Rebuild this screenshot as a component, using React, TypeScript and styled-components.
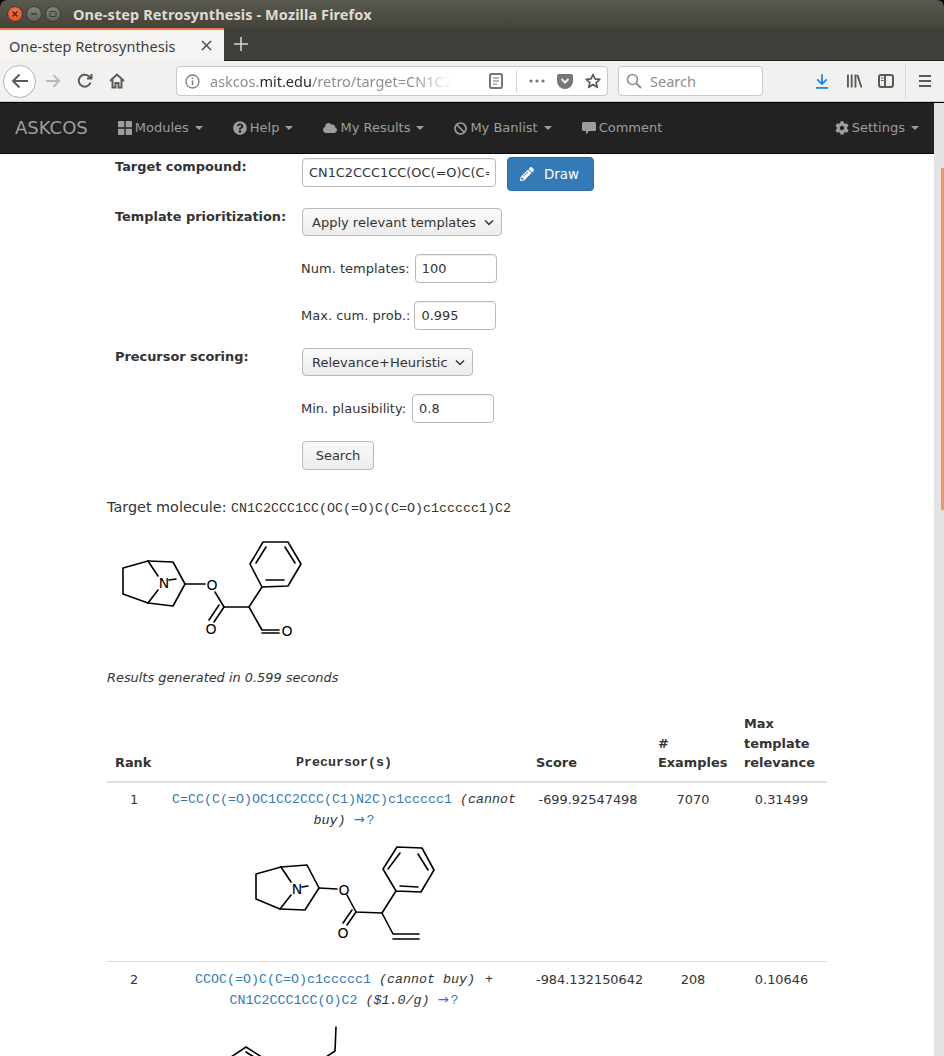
import React from "react";
import styled, { createGlobalStyle } from "styled-components";
import { FaCloud, FaBan, FaCog, FaQuestionCircle, FaPencilAlt } from "react-icons/fa";

const Global = createGlobalStyle`
  html, body { margin: 0; padding: 0; height: 1056px; overflow: hidden; background: #fff; }
  * { box-sizing: border-box; }
`;

const sans = `"DejaVu Sans", Verdana, sans-serif`;
const ui = `"Noto Sans", "Open Sans", sans-serif`;
const mono = `"Liberation Mono", "Courier New", monospace`;

const Win = styled.div`
  width: 944px; height: 1056px; display: flex; flex-direction: column; overflow: hidden;
  background: #000;
`;
const TitleBar = styled.div`
  height: 28px; flex: none; display: flex; align-items: center; padding-left: 7px;
  background: linear-gradient(#5a5950, #454439); border-radius: 7px 7px 0 0;
`;
const WinBtn = styled.span<{ $close?: boolean }>`
  width: 16px; height: 16px; border-radius: 50%; margin-right: 3px; display: flex;
  align-items: center; justify-content: center;
  background: ${p => (p.$close ? "radial-gradient(circle at 50% 35%, #f47a4a, #d9471c)" : "linear-gradient(#84837b, #63625a)")};
  border: 1px solid #3c3b34;
`;
const Title = styled.div`
  margin-left: 9px; font: 700 14.5px ${ui}; letter-spacing: 0.1px; color: #dfdbd2; white-space: nowrap;
`;
const TabStrip = styled.div`
  height: 33px; flex: none; display: flex; background: #3f3e38; border-bottom: 1px solid #1c1b18;
`;
const Tab = styled.div`
  width: 224px; height: 33px; flex: none; background: #f5f4f2; border-top: 2px solid #ee7c50;
  display: flex; align-items: center; padding-left: 9px; font: 400 14.5px ${ui}; color: #3e3d39;
`;
const TabLabel = styled.span` flex: 1; white-space: nowrap; `;
const TabClose = styled.svg` margin-right: 12px; flex: none; `;
const NewTab = styled.svg` margin: 9px 0 0 10px; flex: none; `;
const Toolbar = styled.div`
  height: 41px; flex: none; display: flex; align-items: center; background: #f2f1ef;
  border-bottom: 1px solid #cfcdc9; padding-left: 3px;
`;
const BackBtn = styled.span`
  width: 33px; height: 33px; border-radius: 50%; background: #fff; border: 1px solid #b3b1ad;
  display: flex; align-items: center; justify-content: center; flex: none;
`;
const ToolIcon = styled.svg<{ $ml: number }>`
  margin-left: ${p => p.$ml}px; flex: none; display: block;
`;
const UrlBar = styled.div`
  width: 432px; height: 30px; margin-left: 51px; flex: none; background: #fff;
  border: 1px solid #cbc9c5; border-radius: 4px; display: flex; align-items: center; padding-left: 8px;
`;
const UrlText = styled.div`
  width: 242px; margin-left: 10px; white-space: nowrap; flex: none;
  font: 400 14.5px ${ui}; color: #8f8e8b;
  mask-image: linear-gradient(to right, #000 84%, transparent 100%);
`;
const UrlHost = styled.span` color: #2b2a28; `;
const UrlSep = styled.span` width: 1px; height: 22px; background: #d5d3cf; margin-left: 13px; flex: none; `;
const SearchBox = styled.div`
  width: 145px; height: 30px; margin-left: 10px; flex: none; background: #fff;
  border: 1px solid #cbc9c5; border-radius: 4px; display: flex; align-items: center; padding-left: 7px;
  font: 400 14.5px ${ui}; color: #8f8e8b;
`;
const SearchLabel = styled.span` margin-left: 8px; `;
const ToolSep = styled.span` width: 1px; height: 34px; background: #dcdad6; margin-left: 11px; flex: none; `;
const Body = styled.div` flex: 1; min-height: 0; display: flex; background: #fff; margin-top: 1px; `;
const Main = styled.div` flex: 1; min-width: 0; overflow: hidden; background: #fff; `;
const Scrollbar = styled.div` width: 10px; flex: none; background: #e3e3e3; padding: 65px 0 0 7px; `;
const Thumb = styled.div` width: 3px; height: 342px; background: #f29269; `;
const Navbar = styled.nav`
  height: 51px; display: flex; align-items: center; background: #222; border-bottom: 1px solid #080808;
  font: 400 13px/20px ${sans}; color: #9d9d9d;
`;
const Brand = styled.div` padding: 0 15px; font-size: 18px; `;
const NavItem = styled.div`
  padding: 0 15px; display: flex; align-items: center; gap: 3px; white-space: nowrap;
`;
const NavSpacer = styled.div` flex: 1; `;
const Caret = styled.span`
  width: 0; height: 0; margin-left: 3px; border-top: 4px solid #9d9d9d;
  border-left: 4px solid transparent; border-right: 4px solid transparent;
`;
const Container = styled.div`
  width: 720px; margin-left: 107px; padding-top: 3px; font: 400 12.9px/20px ${sans}; color: #333;
`;
const Form = styled.div` display: flex; flex-direction: column; gap: 18px; padding-left: 8px; `;
const Row = styled.div<{ $h: number }>`
  display: grid; grid-template-columns: 187px auto; height: ${p => p.$h}px;
`;
const RowLabel = styled.div` font-weight: 700; line-height: 18px; `;
const FirstLabel = styled(RowLabel)` padding-top: 1px; `;
const Field = styled.div` display: flex; align-items: flex-start; `;
const SubField = styled(Field)` align-items: center; margin-left: -1px; font-size: 13px; `;
const SubLabel = styled.span<{ $gap: number }>` margin-right: ${p => p.$gap}px; white-space: nowrap; `;
const TextInput = styled.input<{ $w: number }>`
  width: ${p => p.$w}px; height: 29px; padding: 0 6px; border: 1px solid #b9b9b9; border-radius: 4px;
  font: 400 12.9px ${sans}; color: #333; background: #fff; box-shadow: inset 0 1px 1px rgba(0,0,0,.075);
  outline: none; margin-top: 1px;
`;
const FlushInput = styled(TextInput)` margin-top: 0; `;
const DrawButton = styled.button`
  width: 87px; height: 34px; margin-left: 11px; background: #337ab7; border: 1px solid #2e6da4;
  border-radius: 4px; color: #fff; font: 400 13.33px ${sans}; display: flex; align-items: center;
  padding: 0 0 0 12px; gap: 10px;
`;
const Select = styled.button`
  height: 28px; padding: 0 6px 0 9px; border: 1px solid #b9b9b9; border-radius: 4px;
  background: linear-gradient(#fafafa, #ececec); color: #333; font: 400 13px ${sans};
  display: flex; align-items: center; gap: 6.5px; white-space: nowrap;
`;
const SearchButton = styled.button`
  width: 72px; height: 29px; padding: 0; border: 1px solid #b9b9b9; border-radius: 4px;
  background: linear-gradient(#fafafa, #ececec); color: #333; font: 400 13px ${sans};
`;
const Spacer = styled.div` height: 1px; `;
const TargetLine = styled.div` margin-top: 27px; height: 20px; font-size: 14.4px; `;
const Mono = styled.span` font-family: ${mono}; font-size: 13.33px; `;
const Molecule = styled.svg`
  display: block; overflow: visible;
  & line, & polyline, & polygon { stroke: #000; stroke-width: 1.6; fill: none; stroke-linecap: round; stroke-linejoin: round; }
  & text { font: 400 14px ${sans}; fill: #000; text-anchor: middle; }
`;
const TopMolecule = styled(Molecule)` margin-top: 13px; `;
const CellMolecule = styled(Molecule)` margin: 0 auto; `;
const Note = styled.div` margin-top: 23px; font-style: italic; `;
const Table = styled.table`
  width: 720px; margin-top: 18px; border-collapse: collapse; table-layout: fixed;
`;
const Th = styled.th<{ $center?: boolean }>`
  padding: 8px; vertical-align: bottom; text-align: ${p => (p.$center ? "center" : "left")};
  border-bottom: 2px solid #ddd; font-weight: 700; line-height: 19.5px;
`;
const MonoTh = styled(Th)` font-family: ${mono}; font-size: 13.33px; `;
const Tr = styled.tr` & + & > td { border-top: 1px solid #ddd; } `;
const Td = styled.td` padding: 7.5px 8px 8px; text-align: center; vertical-align: top; `;
const RankTd = styled(Td)` padding-left: 9px; `;
const ScoreTd = styled(Td)` padding-right: 10px; `;
const PrecursorTd = styled(Td)` font-family: ${mono}; font-size: 13.33px; `;
const Link = styled.a` color: #337ab7; text-decoration: none; `;
const Arrow = styled.span` color: #337ab7; font-family: ${sans}; margin-right: 2px; `;
const Em = styled.em` font-style: italic; `;
const Plus = styled.span` margin-left: 2px; `;

const Bonds = ({ l, p }: { l: number[][]; p?: number[][] }) => (
  <>
    {l.map((s, i) => (
      <line key={i} x1={s[0]} y1={s[1]} x2={s[2]} y2={s[3]} />
    ))}
    {p?.map((s, i) => (
      <polyline key={i} points={s.join(" ")} />
    ))}
  </>
);

const Mol1 = () => (
  <TopMolecule width={200} height={115} viewBox="107 530 200 115">
    <Bonds
      p={[
        [148, 561, 123, 568, 123, 594, 148, 603],
        [148, 561, 173, 562, 185, 584, 173, 606, 148, 603],
        [185, 584, 205, 584],
        [215, 592, 224, 607, 249, 607, 262, 587, 288, 586, 301, 564, 288, 542, 263, 542, 250, 564, 262, 587],
        [249, 607, 262, 630, 279, 630],
      ]}
      l={[
        [148, 561, 158, 576], [148, 603, 158, 590], [169, 580, 176, 579],
        [224, 607, 214, 622], [219, 605, 209, 620], [262, 633, 279, 633],
        [266, 580, 284, 580], [295, 563, 285, 547], [256, 563, 266, 547],
      ]}
    />
    <text x="164" y="588">N</text>
    <text x="212" y="590">O</text>
    <text x="211" y="634">O</text>
    <text x="287" y="636">O</text>
  </TopMolecule>
);

const Mol2 = () => (
  <CellMolecule width={200} height={122} viewBox="244 830 200 122">
    <Bonds
      p={[
        [281, 866, 256, 873, 256, 898, 280, 908],
        [281, 866, 307, 864, 319, 887, 305, 909, 280, 908],
        [319, 887, 337, 888],
        [347, 894, 356, 911, 382, 912, 396, 890, 421, 891, 434, 869, 422, 847, 397, 846, 383, 868, 396, 890],
        [382, 912, 393, 933, 419, 933],
      ]}
      l={[
        [281, 866, 291, 881], [280, 908, 291, 894], [302, 886, 308, 885],
        [356, 911, 347, 924], [352, 909, 343, 922], [393, 938, 419, 938],
        [400, 885, 418, 886], [428, 869, 418, 853], [388, 868, 400, 852],
      ]}
    />
    <text x="297" y="893">N</text>
    <text x="344" y="894">O</text>
    <text x="343" y="937">O</text>
  </CellMolecule>
);

const Mol3 = () => (
  <CellMolecule width={200} height={122} viewBox="244 1010 200 122">
    <Bonds
      p={[[336, 1026, 335, 1050, 320, 1060], [222, 1062, 246, 1046, 268, 1060]]}
      l={[[246, 1051, 262, 1061]]}
    />
  </CellMolecule>
);

const Chevron = () => (
  <svg width="12" height="7" viewBox="0 0 12 7"><path d="M2 1.5l4 4 4-4" fill="none" stroke="#333" strokeWidth="1.5" /></svg>
);

const s = { fill: "none", stroke: "#5b5a57", strokeWidth: 2 } as const;

export default function App() {
  return (
    <Win>
      <Global />
      <TitleBar>
        <WinBtn $close>
          <svg width="8" height="8" viewBox="0 0 8 8"><path d="M1.5 1.5l5 5M6.5 1.5l-5 5" stroke="#5a2008" strokeWidth="1.5" /></svg>
        </WinBtn>
        <WinBtn>
          <svg width="8" height="8" viewBox="0 0 8 8"><path d="M1 4h6" stroke="#3a3933" strokeWidth="1.5" /></svg>
        </WinBtn>
        <WinBtn>
          <svg width="8" height="8" viewBox="0 0 8 8"><rect x="1" y="1.5" width="6" height="5" rx="1" fill="none" stroke="#3a3933" /></svg>
        </WinBtn>
        <Title>One-step Retrosynthesis - Mozilla Firefox</Title>
      </TitleBar>
      <TabStrip>
        <Tab>
          <TabLabel>One-step Retrosynthesis</TabLabel>
          <TabClose width="11" height="11" viewBox="0 0 11 11"><path d="M1 1l9 9M10 1l-9 9" stroke="#55544f" strokeWidth="1.6" /></TabClose>
        </Tab>
        <NewTab width="14" height="14" viewBox="0 0 14 14"><path d="M7 0v14M0 7h14" stroke="#d5d3cd" strokeWidth="1.6" /></NewTab>
      </TabStrip>
      <Toolbar>
        <BackBtn>
          <svg width="18" height="16" viewBox="0 0 18 16"><path d="M17 8H2M8.5 1.5L2 8l6.5 6.5" {...s} /></svg>
        </BackBtn>
        <ToolIcon $ml={9} width="16" height="16" viewBox="0 0 18 16"><path d="M1 8h15M9.5 1.5L16 8l-6.5 6.5" {...s} stroke="#b9b8b5" /></ToolIcon>
        <ToolIcon $ml={16} width="16" height="16" viewBox="0 0 16 16"><path d="M13.5 9.5A6 6 0 1 1 11.5 3L14 5M14.5 1v4.5H10" {...s} /></ToolIcon>
        <ToolIcon $ml={16} width="16" height="16" viewBox="0 0 16 16"><path d="M1 8l7-6.5L15 8M3.5 6.5V14.5h3V10h3v4.5h3V6.5" {...s} /></ToolIcon>
        <UrlBar>
          <svg width="15" height="15" viewBox="0 0 15 15"><circle cx="7.5" cy="7.5" r="6.5" fill="none" stroke="#7d7c79" strokeWidth="1.3" /><path d="M7.5 6.5v4.5M7.5 3.5v1.5" stroke="#7d7c79" strokeWidth="1.5" /></svg>
          <UrlText>askcos.<UrlHost>mit.edu</UrlHost>/retro/target=CN1C2</UrlText>
          <ToolIcon $ml={37} width="14" height="16" viewBox="0 0 14 16"><rect x="1" y="1" width="12" height="14" rx="1.5" fill="none" stroke="#777673" strokeWidth="2" /><path d="M4 5h6M4 8h6M4 11h4" stroke="#777673" strokeWidth="1.2" /></ToolIcon>
          <UrlSep />
          <ToolIcon $ml={12} width="16" height="4" viewBox="0 0 16 4"><circle cx="2" cy="2" r="1.6" fill="#777673" /><circle cx="8" cy="2" r="1.6" fill="#777673" /><circle cx="14" cy="2" r="1.6" fill="#777673" /></ToolIcon>
          <ToolIcon $ml={12} width="16" height="15" viewBox="0 0 16 15"><path d="M2 0h12a2 2 0 0 1 2 2v5A8 8 0 0 1 0 7V2a2 2 0 0 1 2-2z" fill="#777673" /><path d="M4.5 5L8 8.5 11.5 5" fill="none" stroke="#f2f1ef" strokeWidth="2" /></ToolIcon>
          <ToolIcon $ml={12} width="16" height="16" viewBox="0 0 16 16"><path d="M8 1.5l2 4.4 4.8.5-3.6 3.2 1 4.7L8 11.5l-4.2 2.8 1-4.7L1.2 6.4 6 5.9z" fill="none" stroke="#5b5a57" strokeWidth="1.7" strokeLinejoin="round" /></ToolIcon>
        </UrlBar>
        <SearchBox>
          <svg width="16" height="16" viewBox="0 0 16 16"><circle cx="6.5" cy="6.5" r="5" fill="none" stroke="#8f8e8b" strokeWidth="1.6" /><path d="M10.5 10.5L15 15" stroke="#8f8e8b" strokeWidth="2" /></svg>
          <SearchLabel>Search</SearchLabel>
        </SearchBox>
        <ToolIcon $ml={53} width="12" height="15" viewBox="0 0 14 17"><path d="M7 0v11M1.5 6L7 11.5 12.5 6" fill="none" stroke="#0a84ff" strokeWidth="2" /><path d="M0 16h14" stroke="#0a84ff" strokeWidth="2" /></ToolIcon>
        <ToolIcon $ml={19} width="15" height="14" viewBox="0 0 16 14"><path d="M1 0v14M5 0v14M9 0v14M11 0.5L15.5 14" {...s} /></ToolIcon>
        <ToolIcon $ml={16} width="16" height="14" viewBox="0 0 16 14"><rect x="1" y="1" width="14" height="12" rx="2" {...s} /><path d="M7 1v12" {...s} /><path d="M3 4h2.5M3 6.5h2.5" stroke="#5b5a57" strokeWidth="1" /></ToolIcon>
        <ToolSep />
        <ToolIcon $ml={13} width="12" height="12" viewBox="0 0 12 12"><path d="M0 1h12M0 6h12M0 11h12" {...s} /></ToolIcon>
      </Toolbar>
      <Body>
        <Main>
          <Navbar>
            <Brand>ASKCOS</Brand>
            <NavItem>
              <svg width="14" height="14" viewBox="0 0 14 14" fill="#9d9d9d"><rect width="6.3" height="6.3" rx=".6" /><rect x="7.7" width="6.3" height="6.3" rx=".6" /><rect y="7.7" width="6.3" height="6.3" rx=".6" /><rect x="7.7" y="7.7" width="6.3" height="6.3" rx=".6" /></svg>
              Modules <Caret />
            </NavItem>
            <NavItem><FaQuestionCircle size={14} /> Help <Caret /></NavItem>
            <NavItem><FaCloud size={14} /> My Results <Caret /></NavItem>
            <NavItem><FaBan size={13} /> My Banlist <Caret /></NavItem>
            <NavItem>
              <svg width="14" height="14" viewBox="0 0 14 14" fill="#9d9d9d"><path d="M1.5 1h11A1.5 1.5 0 0 1 14 2.5v6a1.5 1.5 0 0 1-1.5 1.5H7l-3 3.5V10H1.5A1.5 1.5 0 0 1 0 8.5v-6A1.5 1.5 0 0 1 1.5 1z" /></svg>
              Comment
            </NavItem>
            <NavSpacer />
            <NavItem><FaCog size={14} /> Settings <Caret /></NavItem>
          </Navbar>
          <Container>
            <Form>
              <Row $h={33}>
                <FirstLabel>Target compound:</FirstLabel>
                <Field>
                  <TextInput $w={194} readOnly value="CN1C2CCC1CC(OC(=O)C(C=O)c1ccccc1)C2" />
                  <DrawButton><FaPencilAlt size={14} /> Draw</DrawButton>
                </Field>
              </Row>
              <Row $h={28}>
                <RowLabel>Template prioritization:</RowLabel>
                <Field>
                  <Select>Apply relevant templates<Chevron /></Select>
                </Field>
              </Row>
              <Row $h={29}>
                <Spacer />
                <SubField><SubLabel $gap={5}>Num. templates:</SubLabel><FlushInput $w={82} readOnly value="100" /></SubField>
              </Row>
              <Row $h={29}>
                <Spacer />
                <SubField><SubLabel $gap={4}>Max. cum. prob.:</SubLabel><FlushInput $w={82} readOnly value="0.995" /></SubField>
              </Row>
              <Row $h={28}>
                <RowLabel>Precursor scoring:</RowLabel>
                <Field>
                  <Select>Relevance+Heuristic<Chevron /></Select>
                </Field>
              </Row>
              <Row $h={29}>
                <Spacer />
                <SubField><SubLabel $gap={6}>Min. plausibility:</SubLabel><FlushInput $w={82} readOnly value="0.8" /></SubField>
              </Row>
              <Row $h={29}>
                <Spacer />
                <Field><SearchButton>Search</SearchButton></Field>
              </Row>
            </Form>
            <TargetLine>Target molecule: <Mono>CN1C2CCC1CC(OC(=O)C(C=O)c1ccccc1)C2</Mono></TargetLine>
            <Mol1 />
            <Note>Results generated in 0.599 seconds</Note>
            <Table>
              <colgroup>
                <col width="53" /><col width="368" /><col width="122" /><col width="86" /><col width="91" />
              </colgroup>
              <thead>
                <tr>
                  <Th>Rank</Th>
                  <MonoTh $center>Precursor(s)</MonoTh>
                  <Th>Score</Th>
                  <Th># Examples</Th>
                  <Th>Max template relevance</Th>
                </tr>
              </thead>
              <tbody>
                <Tr>
                  <RankTd>1</RankTd>
                  <PrecursorTd>
                    <Link>C=CC(C(=O)OC1CC2CCC(C1)N2C)c1ccccc1</Link> <Em>(cannot buy)</Em> <Arrow>→</Arrow><Link>?</Link>
                    <Mol2 />
                  </PrecursorTd>
                  <ScoreTd>-699.92547498</ScoreTd>
                  <Td>7070</Td>
                  <Td>0.31499</Td>
                </Tr>
                <Tr>
                  <RankTd>2</RankTd>
                  <PrecursorTd>
                    <Link>CCOC(=O)C(C=O)c1ccccc1</Link> <Em>(cannot buy)</Em> <Plus>+</Plus> <Link>CN1C2CCC1CC(O)C2</Link> <Em>($1.0/g)</Em> <Arrow>→</Arrow><Link>?</Link>
                    <Mol3 />
                  </PrecursorTd>
                  <ScoreTd>-984.132150642</ScoreTd>
                  <Td>208</Td>
                  <Td>0.10646</Td>
                </Tr>
              </tbody>
            </Table>
          </Container>
        </Main>
        <Scrollbar><Thumb /></Scrollbar>
      </Body>
    </Win>
  );
}
